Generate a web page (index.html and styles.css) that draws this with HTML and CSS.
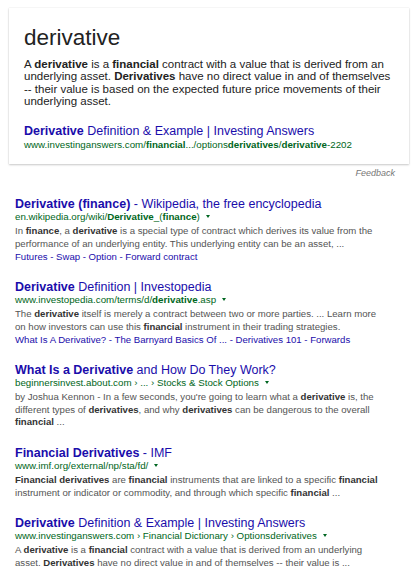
FILE: index.html
```html
<!DOCTYPE html>
<html>
<head>
<meta charset="utf-8">
<link rel="stylesheet" href="styles.css">
</head>
<body>
<div class="page">
  <div class="card">
    <div class="term">derivative</div>
    <div class="def">A <b>derivative</b> is a <b>financial</b> contract with a value that is derived from an underlying asset. <b>Derivatives</b> have no direct value in and of themselves -- their value is based on the expected future price movements of their underlying asset.</div>
    <div class="card-link"><b>Derivative</b> Definition &amp; Example | Investing Answers</div>
    <div class="card-url">www.investinganswers.com/<b>financial</b>.../options<b>derivatives</b>/<b>derivative</b>-2202</div>
  </div>
  <div class="feedback">Feedback</div>

  <div class="result">
    <div class="title"><b>Derivative (finance)</b> - Wikipedia, the free encyclopedia</div>
    <div class="url">en.wikipedia.org/wiki/<b>Derivative</b>_(<b>finance</b>)<span class="arrow"></span></div>
    <div class="snippet">In <b>finance</b>, a <b>derivative</b> is a special type of contract which derives its value from the performance of an underlying entity. This underlying entity can be an asset, ...</div>
    <div class="sitelinks">Futures - Swap - Option - Forward contract</div>
  </div>

  <div class="result">
    <div class="title"><b>Derivative</b> Definition | Investopedia</div>
    <div class="url">www.investopedia.com/terms/d/<b>derivative</b>.asp<span class="arrow"></span></div>
    <div class="snippet">The <b>derivative</b> itself is merely a contract between two or more parties. ... Learn more on how investors can use this <b>financial</b> instrument in their trading strategies.</div>
    <div class="sitelinks">What Is A Derivative? - The Barnyard Basics Of ... - Derivatives 101 - Forwards</div>
  </div>

  <div class="result">
    <div class="title"><b>What Is a Derivative</b> and How Do They Work?</div>
    <div class="url">beginnersinvest.about.com › ... › Stocks &amp; Stock Options<span class="arrow"></span></div>
    <div class="snippet">by Joshua Kennon - In a few seconds, you're going to learn what a <b>derivative</b> is, the different types of <b>derivatives</b>, and why <b>derivatives</b> can be dangerous to the overall <b>financial</b> ...</div>
  </div>

  <div class="result">
    <div class="title"><b>Financial Derivatives</b> - IMF</div>
    <div class="url">www.imf.org/external/np/sta/fd/<span class="arrow"></span></div>
    <div class="snippet"><b>Financial derivatives</b> are <b>financial</b> instruments that are linked to a specific <b>financial</b> instrument or indicator or commodity, and through which specific <b>financial</b> ...</div>
  </div>

  <div class="result">
    <div class="title"><b>Derivative</b> Definition &amp; Example | Investing Answers</div>
    <div class="url">www.investinganswers.com › Financial Dictionary › Optionsderivatives<span class="arrow"></span></div>
    <div class="snippet">A <b>derivative</b> is a <b>financial</b> contract with a value that is derived from an underlying asset. <b>Derivatives</b> have no direct value in and of themselves -- their value is ...</div>
  </div>
</div>
</body>
</html>
```

FILE: styles.css
```css
html, body {
  margin: 0;
  padding: 0;
  background: #ffffff;
}
body {
  font-family: "Liberation Sans", Arial, sans-serif;
  width: 414px;
  height: 570px;
  overflow: hidden;
}
.page {
  padding: 8px 5px 0 9px;
}
.card {
  width: 370px;
  padding: 17px 15px 13.5px 15px;
  background: #fff;
  box-shadow: 0 1px 2px rgba(0,0,0,0.2), 0 0 1px rgba(0,0,0,0.14);
}
.term {
  font-size: 22.5px;
  line-height: 26px;
  color: #222;
}
.def {
  margin-top: 6.5px;
  font-size: 11.5px;
  line-height: 12.6px;
  color: #222;
}
.card-link {
  margin-top: 16px;
  font-size: 12.5px;
  line-height: 14px;
  color: #1a0dab;
  white-space: nowrap;
}
.card-url {
  font-size: 9.75px;
  line-height: 13px;
  color: #006621;
  white-space: nowrap;
}
.feedback {
  text-align: right;
  padding-right: 14px;
  margin-top: 2.7px;
  font-size: 9px;
  line-height: 12px;
  font-style: italic;
  color: #777;
}
.result {
  padding-left: 6px;
  margin-top: 16.5px;
}
.feedback + .result { margin-top: 18px; }
.title {
  font-size: 12.5px;
  line-height: 14px;
  color: #1a0dab;
  white-space: nowrap;
}
.url {
  font-size: 9.75px;
  line-height: 12.5px;
  margin-bottom: 1.5px;
  color: #006621;
  white-space: nowrap;
}
.arrow {
  display: inline-block;
  width: 0;
  height: 0;
  margin-left: 6px;
  vertical-align: 2px;
  border-left: 2.5px solid transparent;
  border-right: 2.5px solid transparent;
  border-top: 3px solid #006621;
}
.snippet {
  width: 372px;
  font-size: 9.6px;
  line-height: 12.8px;
  color: #545454;
}
.snippet b { color: #333; }
.sitelinks {
  font-size: 9.6px;
  line-height: 12.8px;
  color: #1a0dab;
  white-space: nowrap;
}
```
